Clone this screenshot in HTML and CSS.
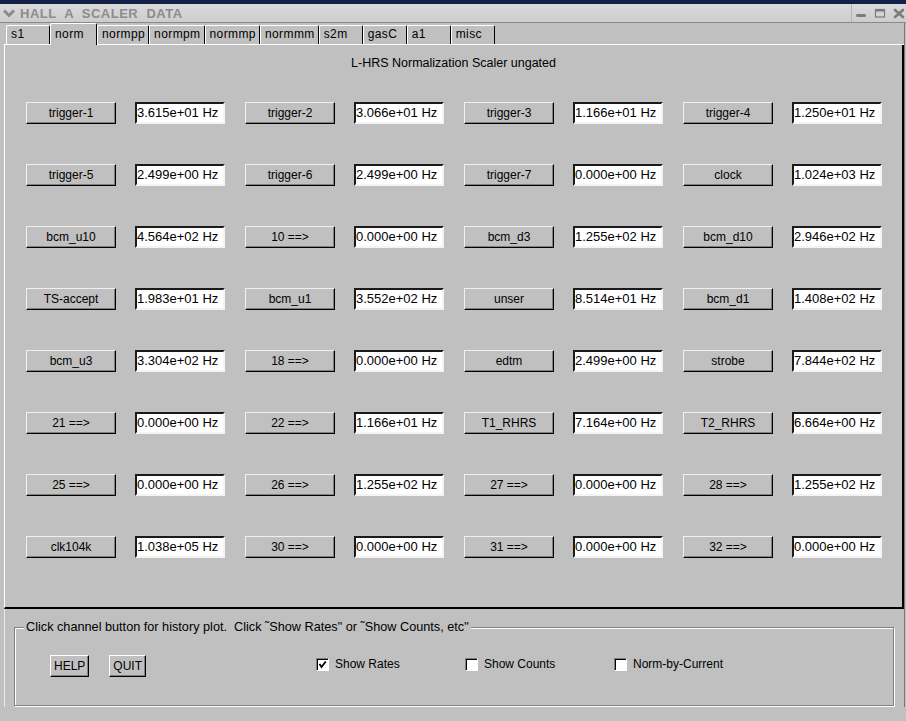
FILE: index.html
```html
<!DOCTYPE html>
<html>
<head>
<meta charset="utf-8">
<title>HALL A SCALER DATA</title>
<link rel="stylesheet" href="styles.css">
</head>
<body>
<div class="topbar"></div>
<div class="titlebar">
  <svg class="chev" width="12" height="8" viewBox="0 0 12 8"><polyline points="1,1.5 6,6.5 11,1.5" fill="none" stroke="#8a8a8a" stroke-width="3"/></svg>
  <span class="title">HALL  A  SCALER  DATA</span>
  <div class="wm">
    <svg width="54" height="18" viewBox="0 0 54 18">
      <rect x="4" y="10" width="10" height="3" rx="1.5" fill="#7c7c7c"/>
      <rect x="23.5" y="5.5" width="9" height="7.5" fill="none" stroke="#7c7c7c" stroke-width="1.2"/>
      <rect x="23" y="5" width="10" height="2.5" fill="#7c7c7c"/>
      <path d="M43 6 L51 13 M51 6 L43 13" stroke="#7c7c7c" stroke-width="2.6" stroke-linecap="round"/>
    </svg>
  </div>
</div>
<div class="frame">
  <div class="tabs">
    <div class="tab">s1</div>
    <div class="tab sel">norm</div>
    <div class="tab">normpp</div>
    <div class="tab">normpm</div>
    <div class="tab">normmp</div>
    <div class="tab">normmm</div>
    <div class="tab">s2m</div>
    <div class="tab">gasC</div>
    <div class="tab">a1</div>
    <div class="tab">misc</div>
  </div>
  <div class="panel">
    <div class="heading">L-HRS Normalization Scaler ungated</div>
    <div class="grid">
      <div class="cell"><div class="btn">trigger-1</div><div class="entry">3.615e+01 Hz</div></div>
      <div class="cell"><div class="btn">trigger-2</div><div class="entry">3.066e+01 Hz</div></div>
      <div class="cell"><div class="btn">trigger-3</div><div class="entry">1.166e+01 Hz</div></div>
      <div class="cell"><div class="btn">trigger-4</div><div class="entry">1.250e+01 Hz</div></div>

      <div class="cell"><div class="btn">trigger-5</div><div class="entry">2.499e+00 Hz</div></div>
      <div class="cell"><div class="btn">trigger-6</div><div class="entry">2.499e+00 Hz</div></div>
      <div class="cell"><div class="btn">trigger-7</div><div class="entry">0.000e+00 Hz</div></div>
      <div class="cell"><div class="btn">clock</div><div class="entry">1.024e+03 Hz</div></div>

      <div class="cell"><div class="btn">bcm_u10</div><div class="entry">4.564e+02 Hz</div></div>
      <div class="cell"><div class="btn">10 ==&gt;</div><div class="entry">0.000e+00 Hz</div></div>
      <div class="cell"><div class="btn">bcm_d3</div><div class="entry">1.255e+02 Hz</div></div>
      <div class="cell"><div class="btn">bcm_d10</div><div class="entry">2.946e+02 Hz</div></div>

      <div class="cell"><div class="btn">TS-accept</div><div class="entry">1.983e+01 Hz</div></div>
      <div class="cell"><div class="btn">bcm_u1</div><div class="entry">3.552e+02 Hz</div></div>
      <div class="cell"><div class="btn">unser</div><div class="entry">8.514e+01 Hz</div></div>
      <div class="cell"><div class="btn">bcm_d1</div><div class="entry">1.408e+02 Hz</div></div>

      <div class="cell"><div class="btn">bcm_u3</div><div class="entry">3.304e+02 Hz</div></div>
      <div class="cell"><div class="btn">18 ==&gt;</div><div class="entry">0.000e+00 Hz</div></div>
      <div class="cell"><div class="btn">edtm</div><div class="entry">2.499e+00 Hz</div></div>
      <div class="cell"><div class="btn">strobe</div><div class="entry">7.844e+02 Hz</div></div>

      <div class="cell"><div class="btn">21 ==&gt;</div><div class="entry">0.000e+00 Hz</div></div>
      <div class="cell"><div class="btn">22 ==&gt;</div><div class="entry">1.166e+01 Hz</div></div>
      <div class="cell"><div class="btn">T1_RHRS</div><div class="entry">7.164e+00 Hz</div></div>
      <div class="cell"><div class="btn">T2_RHRS</div><div class="entry">6.664e+00 Hz</div></div>

      <div class="cell"><div class="btn">25 ==&gt;</div><div class="entry">0.000e+00 Hz</div></div>
      <div class="cell"><div class="btn">26 ==&gt;</div><div class="entry">1.255e+02 Hz</div></div>
      <div class="cell"><div class="btn">27 ==&gt;</div><div class="entry">0.000e+00 Hz</div></div>
      <div class="cell"><div class="btn">28 ==&gt;</div><div class="entry">1.255e+02 Hz</div></div>

      <div class="cell"><div class="btn">clk104k</div><div class="entry">1.038e+05 Hz</div></div>
      <div class="cell"><div class="btn">30 ==&gt;</div><div class="entry">0.000e+00 Hz</div></div>
      <div class="cell"><div class="btn">31 ==&gt;</div><div class="entry">0.000e+00 Hz</div></div>
      <div class="cell"><div class="btn">32 ==&gt;</div><div class="entry">0.000e+00 Hz</div></div>
    </div>
  </div>
  <div class="bottom">
    <div class="group">
      <div class="group-label">Click channel button for history plot.  Click ˜Show Rates" or ˜Show Counts, etc"</div>
      <div class="controls">
        <div class="btns">
          <div class="pbtn">HELP</div>
          <div class="pbtn">QUIT</div>
        </div>
        <div class="chk"><span class="box"><svg width="9" height="9" viewBox="0 0 9 9"><polyline points="1.5,4 3.5,7 7.8,1.5" fill="none" stroke="#000" stroke-width="1.8"/></svg></span><span>Show Rates</span></div>
        <div class="chk"><span class="box"></span><span>Show Counts</span></div>
        <div class="chk"><span class="box"></span><span>Norm-by-Current</span></div>
      </div>
    </div>
  </div>
</div>
</body>
</html>
```
FILE: styles.css
```css
* { box-sizing: border-box; }

body {
  margin: 0;
  width: 906px;
  height: 721px;
  overflow: hidden;
  background: #c0c0c0;
  font-family: "Liberation Sans", Arial, sans-serif;
  font-size: 12px;
  color: #000;
}

.topbar {
  height: 4px;
  background: #13204a;
}

.titlebar {
  height: 19px;
  border-bottom: 1px solid #8a8a8a;
  background: linear-gradient(#dadada, #cdcdcd);
  display: flex;
  align-items: center;
}

.chev {
  display: block;
  margin-left: 3px;
}

.title {
  margin-left: 5px;
  font-weight: bold;
  font-size: 13px;
  letter-spacing: 0.5px;
  color: #8c8c8c;
  white-space: pre;
}

.wm {
  margin-left: auto;
  width: 55px;
  height: 18px;
  border-left: 1px solid #b4b4b4;
}

.wm svg { display: block; }

.frame {
  margin-left: 4px;
  width: 901px;
  border-right: 1px solid #787878;
}

.tabs {
  height: 22px;
  border-bottom: 1px solid #fff;
  display: flex;
  align-items: flex-end;
  padding-left: 2px;
}

.tab {
  height: 19px;
  min-width: 44px;
  padding: 0 3px 0 4px;
  border-top: 1px solid #fff;
  border-left: 1px solid #fff;
  border-right: 1px solid #000;
  border-radius: 2px 2px 0 0;
  font-size: 12px;
  letter-spacing: 0.4px;
  line-height: 17px;
  white-space: nowrap;
}

.tab.sel {
  height: 22px;
  min-width: 47px;
  margin-bottom: -1px;
  background: #c0c0c0;
  line-height: 20px;
}

.panel {
  height: 564px;
  border-left: 1px solid #fff;
  border-right: 2px solid #000;
  border-bottom: 2px solid #000;
  padding: 10px 0 0 21px;
}

.heading {
  height: 16px;
  line-height: 16px;
  font-size: 12.5px;
  text-align: center;
  margin-left: -21px;
}

.grid {
  margin-top: 31px;
  display: grid;
  grid-template-columns: repeat(4, 199px);
  grid-auto-rows: 22px;
  column-gap: 20px;
  row-gap: 40px;
}

.cell {
  display: flex;
  gap: 19px;
}

.btn {
  width: 90px;
  height: 22px;
  border: 1px solid;
  border-color: #f0f0f0 #000 #000 #f0f0f0;
  box-shadow: inset -1px -1px 0 #808080;
  text-align: center;
  line-height: 20px;
  font-size: 12px;
}

.entry {
  width: 90px;
  height: 22px;
  background: #fff;
  border: 2px solid;
  border-color: #1a1a1a #f4f4f4 #f4f4f4 #1a1a1a;
  font-size: 13px;
  line-height: 18px;
  padding-left: 0;
  white-space: pre;
}

.bottom {
  height: 98px;
  border-left: 1px solid #e8e8e8;
  margin-right: 1px;
  padding: 18px 0 0 9px;
}

.group {
  width: 880px;
  height: 79px;
  border: 1px solid #808080;
  box-shadow: inset 1px 1px 0 #fff, 1px 1px 0 #fff;
}

.group-label {
  margin-top: -8px;
  margin-left: 9px;
  width: fit-content;
  padding: 0 2px;
  background: #c0c0c0;
  font-size: 12.7px;
  line-height: 15px;
  white-space: pre;
}

.controls {
  margin-top: 20px;
  height: 22px;
  display: flex;
  align-items: center;
}

.btns {
  width: 301px;
  padding-left: 35px;
  display: flex;
  gap: 20px;
}

.pbtn {
  height: 22px;
  padding: 0 3px;
  border: 1px solid;
  border-color: #fff #000 #000 #fff;
  box-shadow: inset -1px -1px 0 #808080;
  line-height: 20px;
}

.chk {
  width: 149px;
  display: flex;
  align-items: center;
  gap: 6px;
  margin-bottom: 4px;
}

.box {
  width: 13px;
  height: 13px;
  background: #fff;
  border: 1px solid;
  border-color: #808080 #fff #fff #808080;
  box-shadow: inset 1px 1px 0 #000;
  padding: 1px 0 0 1px;
}

.box svg { display: block; }
```
